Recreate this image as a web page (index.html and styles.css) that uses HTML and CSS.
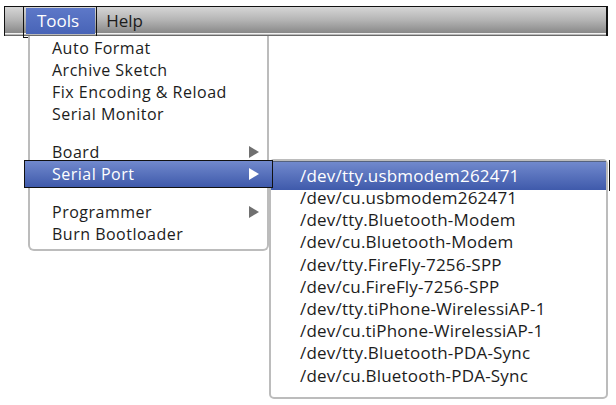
FILE: index.html
```html
<!DOCTYPE html>
<html lang="en">
<head>
  <meta charset="UTF-8">
  <title>Tools menu</title>
  <link rel="stylesheet" href="styles.css">
</head>
<body>
  <div class="screen">
    <div class="menubar">
      <div class="bar-start"></div>
      <div class="bar-item active"><span class="bar-fill">Tools</span></div>
      <div class="bar-item">Help</div>
    </div>

    <div class="menu tools-menu">
      <div class="menu-group">
        <div class="menu-row">Auto Format</div>
        <div class="menu-row">Archive Sketch</div>
        <div class="menu-row">Fix Encoding &amp; Reload</div>
        <div class="menu-row">Serial Monitor</div>
      </div>
      <div class="menu-group">
        <div class="menu-row">Board <span class="arrow"></span></div>
        <div class="menu-row selected">Serial Port <span class="arrow"></span></div>
      </div>
      <div class="menu-group">
        <div class="menu-row">Programmer <span class="arrow"></span></div>
        <div class="menu-row">Burn Bootloader</div>
      </div>
    </div>

    <div class="menu port-menu">
      <div class="port-row selected">/dev/tty.usbmodem262471</div>
      <div class="port-row">/dev/cu.usbmodem262471</div>
      <div class="port-row">/dev/tty.Bluetooth-Modem</div>
      <div class="port-row">/dev/cu.Bluetooth-Modem</div>
      <div class="port-row">/dev/tty.FireFly-7256-SPP</div>
      <div class="port-row">/dev/cu.FireFly-7256-SPP</div>
      <div class="port-row">/dev/tty.tiPhone-WirelessiAP-1</div>
      <div class="port-row">/dev/cu.tiPhone-WirelessiAP-1</div>
      <div class="port-row">/dev/tty.Bluetooth-PDA-Sync</div>
      <div class="port-row">/dev/cu.Bluetooth-PDA-Sync</div>
    </div>
  </div>
</body>
</html>
```

FILE: styles.css
```css
body {
  margin: 0;
  background: #fff;
  font-family: "Open Sans", "DejaVu Sans", sans-serif;
  color: #1c1c1c;
}

.screen {
  position: relative;
  box-sizing: border-box;
  width: 616px;
  height: 405px;
  padding: 6px 8px 0 4px;
}

/* top bar */
.menubar {
  display: flex;
  height: 29px;
  border: 1px solid #111;
  border-bottom: none;
  border-right-width: 2px;
  background: linear-gradient(#d6d6d6 0%, #b4b4b4 45%, #8a8a8a 88%, #f2f2f2 90%, #f2f2f2 94%, #6a6a6a 96%);
}

.bar-start {
  width: 18px;
}

.bar-item {
  font-size: 17px;
  line-height: 28px;
  padding: 0 9px;
}

.bar-item.active {
  margin-top: -1px;
  height: 29px;
  padding: 1px 1px 0 2px;
  border: 1px solid #111;
}

.bar-fill {
  display: block;
  height: 26px;
  line-height: 25px;
  padding: 0 16px 0 11px;
  color: #fff;
  background: linear-gradient(#5d78c8, #4864b7);
}

/* drop down menus */
.menu {
  position: absolute;
  background: #fff;
  border: 2px solid #bcbcbc;
  border-radius: 0 0 6px 6px;
}

.tools-menu {
  left: 28px;
  top: 36px;
  width: 237px;
  border-top: none;
  padding: 1px 0 4px;
  font-size: 16px;
  letter-spacing: 0.5px;
}

.menu-group + .menu-group {
  margin-top: 16px;
}

.menu-row {
  display: flex;
  justify-content: space-between;
  align-items: center;
  height: 22px;
  padding: 0 8px 0 22px;
}

.arrow {
  width: 0;
  height: 0;
  border-top: 6px solid transparent;
  border-bottom: 6px solid transparent;
  border-left: 10px solid #707070;
}

.menu-row.selected {
  position: relative;
  z-index: 2;
  height: 26px;
  margin: -3px -6px;
  padding: 0 13px 0 27px;
  border: 1px solid #111;
  color: #fff;
  background: linear-gradient(#7189cd, #3f5aab);
}

.menu-row.selected .arrow {
  border-left-color: #fff;
}

.port-menu {
  left: 269px;
  top: 159px;
  width: 335px;
  border-radius: 5px;
  padding: 0 0 10px;
  font-size: 17px;
  letter-spacing: 0.2px;
}

.port-row {
  height: 22.2px;
  line-height: 22px;
  padding-left: 29px;
}

.port-row.selected {
  position: relative;
  height: 28px;
  line-height: 28px;
  margin-bottom: -3px;
  color: #fff;
  background: linear-gradient(#7189cd, #3f5aab);
  border-top: 1px solid #55627f;
}

.port-row.selected::after {
  content: "";
  position: absolute;
  right: -4px;
  top: -2px;
  bottom: -1px;
  width: 1px;
  background: #111;
}
```
